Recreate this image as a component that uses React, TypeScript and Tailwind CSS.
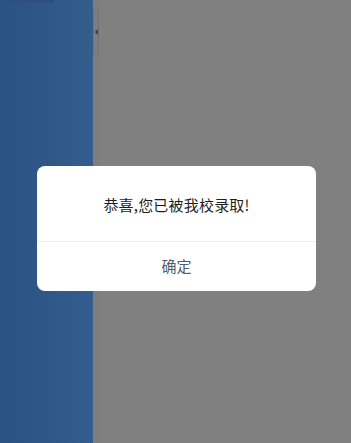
export default function App() {
  return (
    <div className="relative w-[351px] h-[443px] overflow-hidden flex bg-[#808080]" style={{ fontFamily: '"Noto Sans CJK SC", "Noto Sans", sans-serif' }}>
      <div className="w-[93px] h-full bg-gradient-to-r from-[#2a5283] to-[#335d8d] flex flex-col">
        <div className="h-[3px] w-[44px] ml-[10px] bg-[#2d5080]" />
      </div>
      <div className="w-[7px] h-full bg-[#7c7e80] flex flex-col">
        <div className="mt-[8px] h-[48px] w-[6px] border border-[#70757a] bg-[#7a7e82] flex items-center justify-center">
          <div className="w-0 h-0 border-t-[3px] border-b-[3px] border-r-[3px] border-t-transparent border-b-transparent border-r-[#3a3f44]" />
        </div>
      </div>
      <div className="flex-1 h-full bg-[#808080]" />
      <div className="absolute left-[37px] top-[166px] w-[279px] h-[125px] bg-white rounded-[8px] flex flex-col">
        <div className="h-[75px] flex items-center justify-center pt-[4px] text-[15px] text-[#1e1e1e] tracking-[0.2px]">
          恭喜,您已被我校录取!
        </div>
        <div className="h-px bg-[#efefef]" />
        <div className="flex-1 flex items-center justify-center text-[15px] text-[#4e5d6c]">
          确定
        </div>
      </div>
    </div>
  );
}
